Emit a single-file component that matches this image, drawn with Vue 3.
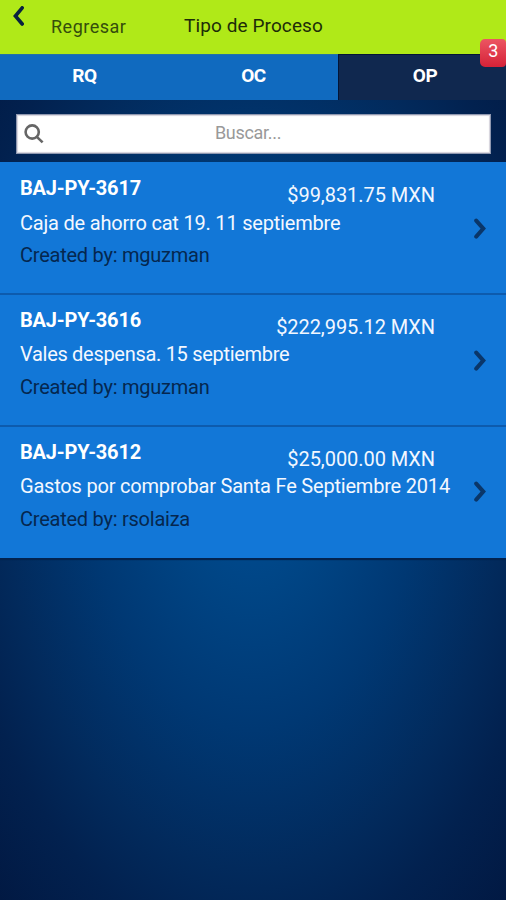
<script setup>
const tabs = [
  { label: 'RQ' },
  { label: 'OC' },
  { label: 'OP', active: true, badge: 3 },
]
const items = [
  { id: 'BAJ-PY-3617', amount: '$99,831.75 MXN', description: 'Caja de ahorro cat 19. 11 septiembre', author: 'mguzman' },
  { id: 'BAJ-PY-3616', amount: '$222,995.12 MXN', description: 'Vales despensa. 15 septiembre', author: 'mguzman' },
  { id: 'BAJ-PY-3612', amount: '$25,000.00 MXN', description: 'Gastos por comprobar Santa Fe Septiembre 2014', author: 'rsolaiza' },
]
</script>

<template>
  <div class="screen">
    <header class="header">
      <button class="back" type="button">
        <svg class="back-icon" viewBox="0 0 12 20" width="12" height="20">
          <path d="M10.2 1.8 L3.4 10 L10.2 18" />
        </svg>
        <span class="back-label">Regresar</span>
      </button>
      <h1 class="title">Tipo de Proceso</h1>
    </header>

    <nav class="tabs">
      <button v-for="tab in tabs" :key="tab.label" type="button" class="tab" :class="{ active: tab.active }">
        <span>{{ tab.label }}</span>
        <span v-if="tab.badge" class="badge">{{ tab.badge }}</span>
      </button>
    </nav>

    <div class="search">
      <div class="search-box">
        <svg class="search-icon" viewBox="0 0 20 20" width="20" height="20">
          <circle cx="8.2" cy="8" r="6.6" />
          <path d="M12.6 12.6 L18.6 18.4" />
        </svg>
        <span class="placeholder">Buscar...</span>
      </div>
    </div>

    <ul class="list">
      <li v-for="item in items" :key="item.id" class="row">
        <div class="content">
          <div class="top">
            <strong class="code">{{ item.id }}</strong>
            <span class="amount">{{ item.amount }}</span>
          </div>
          <div class="description">{{ item.description }}</div>
          <div class="author">Created by: {{ item.author }}</div>
        </div>
        <svg class="chevron" viewBox="0 0 12 22" width="12" height="22">
          <path d="M2.2 2.6 L9.3 10.6 L2.2 18.6" />
        </svg>
      </li>
    </ul>
  </div>
</template>

<style>
body {
  margin: 0;
  background: #02153f;
}
</style>

<style scoped>
.screen {
  display: flex;
  flex-direction: column;
  height: 900px;
  overflow: hidden;
  font-family: Roboto, "Liberation Sans", sans-serif;
  background: radial-gradient(ellipse 420px 700px at 50% 450px, #005099 0%, #004585 20%, #003873 40%, #022a5c 60%, #02214f 72%, #01133a 100%);
}
button {
  margin: 0;
  padding: 0;
  border: 0;
  background: none;
  font-family: inherit;
}
.header {
  display: flex;
  align-items: flex-start;
  flex: none;
  height: 54px;
  box-sizing: border-box;
  background: #b0e918;
}
.back {
  display: flex;
  align-items: flex-start;
  width: 184px;
  padding: 6px 0 0 12px;
  box-sizing: border-box;
}
.back-icon {
  flex: none;
  fill: none;
  stroke: #09223f;
  stroke-width: 3.6;
  stroke-linecap: round;
}
.back-label {
  margin: 10px 0 0 27px;
  font-size: 18px;
  line-height: 22px;
  letter-spacing: 0.5px;
  color: #344d0c;
}
.title {
  margin: 15px 0 0;
  font-size: 19px;
  line-height: 22px;
  font-weight: 400;
  letter-spacing: 0.1px;
  color: #1d2c08;
}
.tabs {
  display: grid;
  grid-template-columns: 169px 169px 168px;
  flex: none;
  height: 46px;
}
.tab {
  position: relative;
  padding-bottom: 3px;
  background: #106abf;
  box-shadow: inset 0 1px #2372a5;
  font-size: 19px;
  font-weight: 700;
  letter-spacing: -0.4px;
  color: #fff;
}
.tab.active {
  padding-left: 6px;
  background: #10284f;
  box-shadow: inset 1px 1px #031535;
}
.badge {
  position: absolute;
  top: -15px;
  right: 0;
  width: 26px;
  height: 28px;
  border-radius: 5px 4px 4px 5px;
  background: linear-gradient(#ec5562, #d52238);
  font-size: 18px;
  font-weight: 400;
  line-height: 24px;
  text-align: center;
}
.search {
  flex: none;
  height: 62px;
  padding: 14px 15px 8px 16px;
  box-sizing: border-box;
}
.search-box {
  display: flex;
  align-items: center;
  height: 40px;
  box-sizing: border-box;
  border: 1px solid #8f98b0;
  background: #fff;
  box-shadow: inset 0 0 1px 1px #d5d3dc;
}
.search-icon {
  flex: none;
  margin-left: 7px;
  fill: none;
  stroke: #666;
  stroke-width: 2.6;
}
.placeholder {
  flex: 1;
  padding: 0 38px 3px 0;
  text-align: center;
  font-size: 18px;
  letter-spacing: -0.3px;
  color: #999;
}
.list {
  flex: none;
  margin: 0;
  padding: 0;
  list-style: none;
  box-shadow: 0 2px 1px #02234f;
}
.row {
  display: flex;
  height: 132px;
  box-sizing: border-box;
  padding: 13px 20px 0 20px;
  border-bottom: 2px solid #0d5bad;
  background: #1277d7;
  font-size: 20px;
  line-height: 24px;
  color: #fff;
}
.row:first-child {
  height: 133px;
  padding-top: 14px;
}
.row:last-child {
  height: 131px;
  border-bottom: 0;
}
.content {
  flex: 1;
  min-width: 0;
  white-space: nowrap;
}
.top {
  display: flex;
  justify-content: space-between;
  width: 415px;
}
.code {
  letter-spacing: -0.2px;
}
.amount {
  padding-top: 7px;
  letter-spacing: -0.06px;
  color: #f2f7ff;
}
.description {
  margin-top: 3px;
  letter-spacing: -0.2px;
  color: #f4f8ff;
}
.row:first-child .description {
  margin: 4px 0 -1px;
}
.row:nth-child(2) .description {
  letter-spacing: -0.3px;
}
.author {
  margin-top: 9px;
  letter-spacing: -0.24px;
  color: #05274f;
}
.chevron {
  flex: none;
  margin-top: 42px;
  fill: none;
  stroke: #0a3669;
  stroke-width: 4;
  stroke-linecap: round;
}
.row:last-child .chevron {
  margin-top: 41px;
}
</style>
